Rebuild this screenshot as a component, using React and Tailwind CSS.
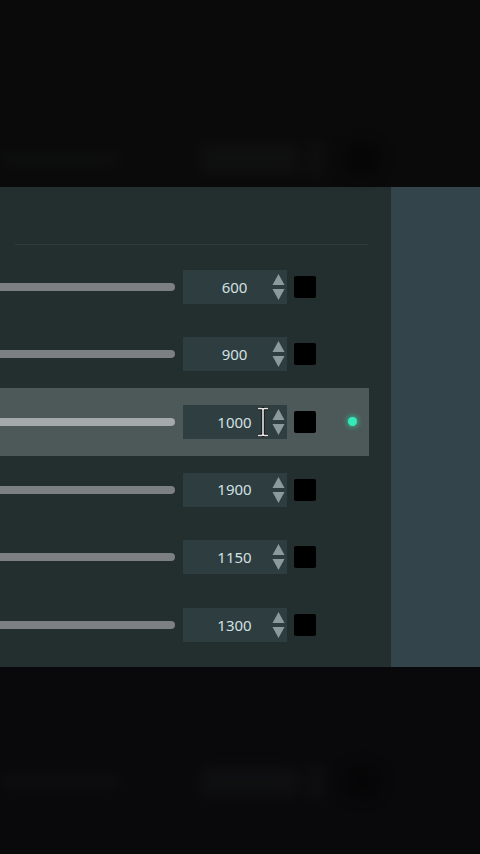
import React from 'react';

const rows = [
  { value: '600' },
  { value: '900' },
  { value: '1000', active: true },
  { value: '1900' },
  { value: '1150' },
  { value: '1300' },
];

const Spinner = () => (
  <svg width="13" height="28" viewBox="0 0 13 28" className="shrink-0">
    <path d="M6.5 1 L12.5 12 L0.5 12 Z" fill="#8b9a9c" />
    <path d="M6.5 27 L12.5 16 L0.5 16 Z" fill="#8b9a9c" />
  </svg>
);

const IBeam = () => (
  <svg width="12" height="30" viewBox="0 0 12 30" className="absolute left-[74px] top-[2px]">
    <path
      d="M1 1.5 H4.5 Q6 1.5 6 3 V27 Q6 28.5 4.5 28.5 H1 M11 1.5 H7.5 Q6 1.5 6 3 M6 27 Q6 28.5 7.5 28.5 H11"
      stroke="#151515"
      strokeWidth="3.4"
      fill="none"
    />
    <path
      d="M1 1.5 H4.5 Q6 1.5 6 3 V27 Q6 28.5 4.5 28.5 H1 M11 1.5 H7.5 Q6 1.5 6 3 M6 27 Q6 28.5 7.5 28.5 H11"
      stroke="#e8e8e8"
      strokeWidth="1.6"
      fill="none"
    />
  </svg>
);

const Row = ({ value, active }) => (
  <div
    className={`flex h-[67.6px] w-[369px] items-center ${active ? 'bg-[#4d5858]' : ''}`}
  >
    <div
      className={`h-[8px] w-[175px] rounded-r-full ${active ? 'bg-[#a4a9a9]' : 'bg-[#7c8080]'}`}
    />
    <div
      className={`relative ml-[8px] flex h-[34px] w-[104px] items-center pr-[2px] ${active ? 'bg-[#2f3e40]' : 'bg-[#2d3d40]'}`}
    >
      <span className="flex-1 pl-[14px] text-center text-[15px] text-[#d3e0e2]">{value}</span>
      <Spinner />
      {active && <IBeam />}
    </div>
    <div className="ml-[7px] h-[22px] w-[22px] rounded-[2px] bg-black" />
    {active && (
      <div className="ml-[32px] h-[9px] w-[9px] rounded-full bg-[#34eab8] shadow-[0_0_6px_#2fe0b0]" />
    )}
  </div>
);

const GhostRow = () => (
  <div className="flex h-[40px] items-center opacity-35 blur-[7px]">
    <div className="h-[10px] w-[120px] bg-[#1a1c1c]" />
    <div className="ml-[80px] h-[30px] w-[100px] bg-[#1a1b1b]" />
    <div className="ml-[10px] h-[36px] w-[12px] bg-[#1c1c1c]" />
    <div className="ml-[20px] h-[36px] w-[40px] rounded-full bg-black" />
  </div>
);

export default function App() {
  return (
    <div
      className="flex h-[854px] w-[480px] flex-col overflow-hidden bg-[#0a0a0b]"
      style={{ fontFamily: '"Noto Sans", "Open Sans", sans-serif' }}
    >
      <div className="flex h-[187px] flex-col justify-end bg-[#0a0a0a] pb-[8px]">
        <GhostRow />
      </div>

      <div className="flex h-[480px]">
        <div className="flex w-[391px] flex-col bg-[#232e2e]">
          <div className="h-[57px]" />
          <div className="ml-[15px] h-px w-[353px] bg-[#2f3b3b]" />
          <div className="flex flex-col pt-[8px]">
            {rows.map((r) => (
              <Row key={r.value} value={r.value} active={r.active} />
            ))}
          </div>
        </div>
        <div className="flex-1 bg-[#33444a]" />
      </div>

      <div className="flex h-[187px] flex-col bg-[#09090b] pt-[95px]">
        <GhostRow />
      </div>
    </div>
  );
}
